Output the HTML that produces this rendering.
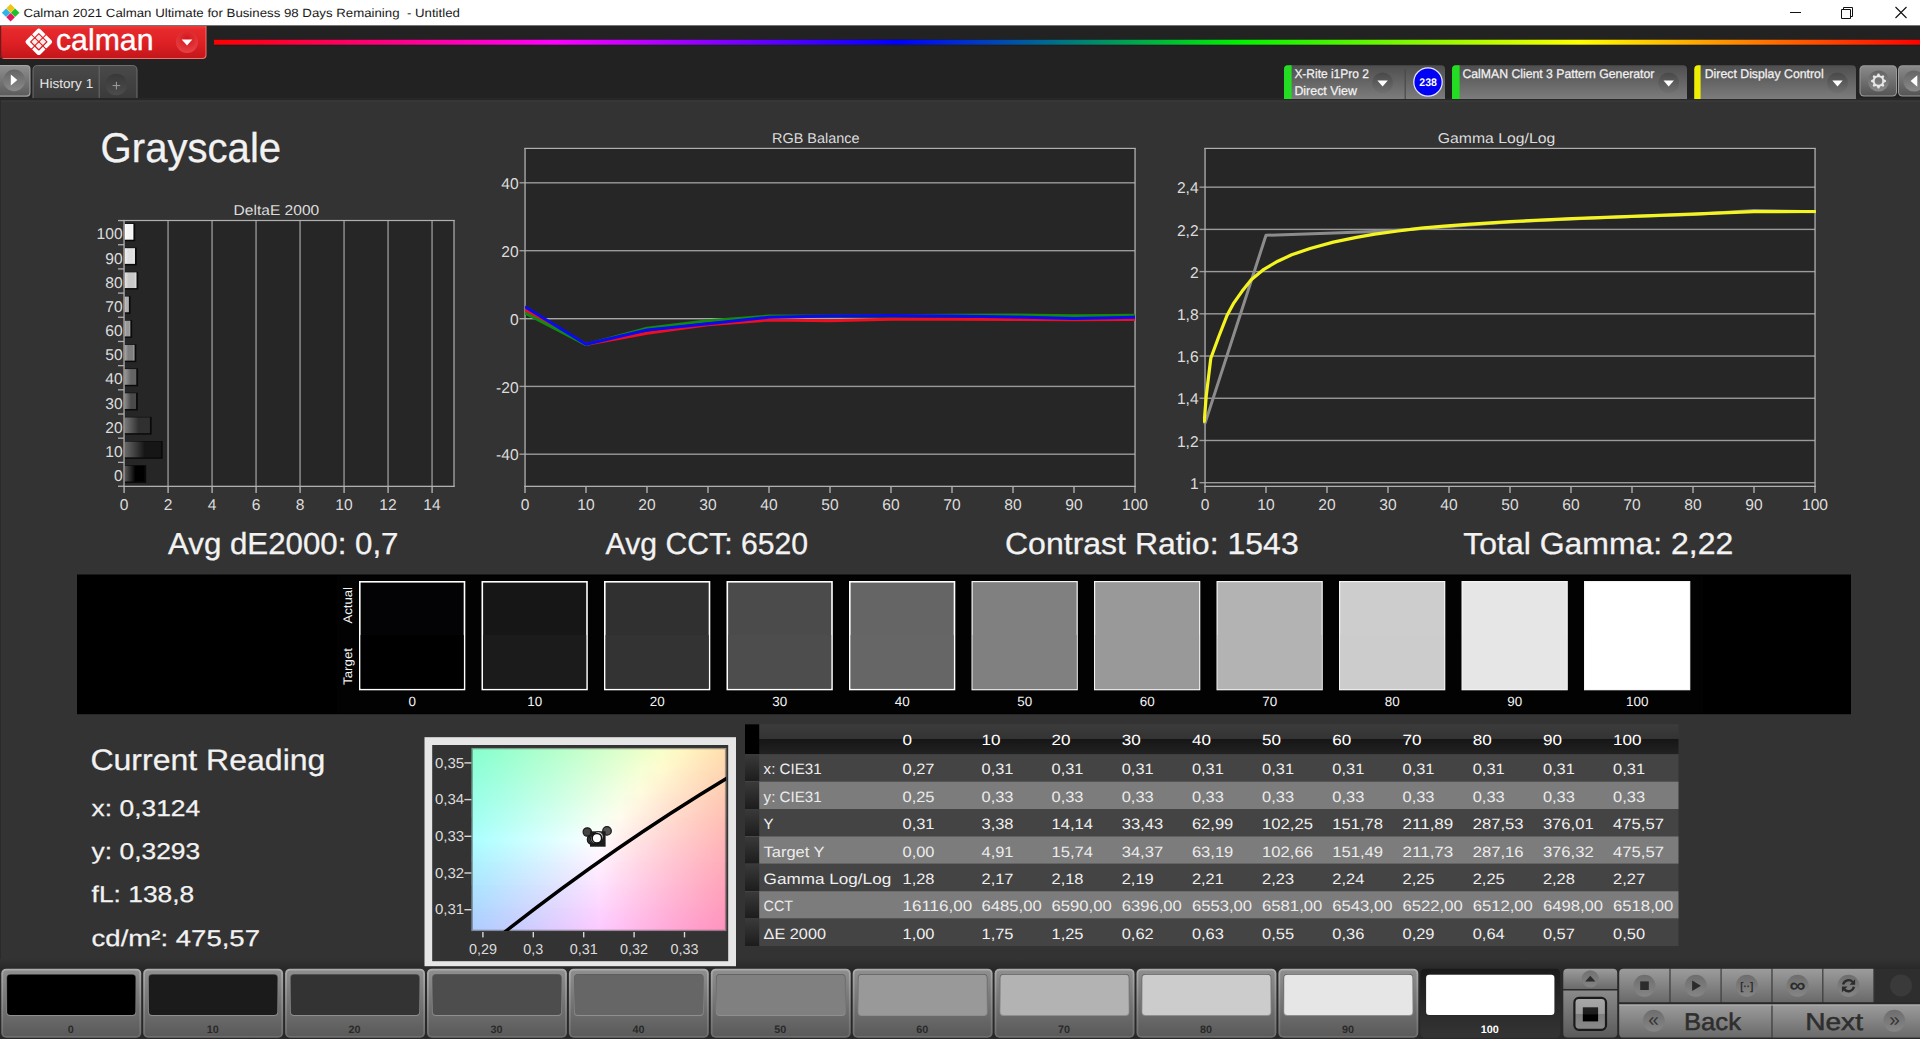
<!DOCTYPE html>
<html lang="en"><head><meta charset="utf-8"><title>Calman 2021 - Grayscale</title>
<style>html,body{margin:0;padding:0;background:#333333;overflow:hidden}svg{display:block;font-family:'Liberation Sans', sans-serif;}text{white-space:pre}</style>
</head><body>
<svg width="1920" height="1039" viewBox="0 0 1920 1039" text-rendering="geometricPrecision">
<defs>
<linearGradient id="rb" x1="0" y1="0" x2="1" y2="0"><stop offset="0" stop-color="#ff0000"/><stop offset="0.2" stop-color="#ff00ff"/><stop offset="0.4" stop-color="#0000ff"/><stop offset="0.6" stop-color="#00f000"/><stop offset="0.8" stop-color="#ffff00"/><stop offset="1" stop-color="#ff0000"/></linearGradient>
<linearGradient id="redb" x1="0" y1="0" x2="0" y2="1"><stop offset="0" stop-color="#f03a3a"/><stop offset="0.12" stop-color="#e62a2c"/><stop offset="0.55" stop-color="#dd2024"/><stop offset="1" stop-color="#c4161a"/></linearGradient>
<radialGradient id="redc" cx="0.5" cy="0.35" r="0.7"><stop offset="0" stop-color="#d4151b"/><stop offset="1" stop-color="#e84548"/></radialGradient>
<linearGradient id="playb" x1="0" y1="0" x2="0" y2="1"><stop offset="0" stop-color="#8e8e8e"/><stop offset="1" stop-color="#5c5c5c"/></linearGradient>
<linearGradient id="playc" x1="0" y1="0" x2="0" y2="1"><stop offset="0" stop-color="#646464"/><stop offset="1" stop-color="#8a8a8a"/></linearGradient>
<linearGradient id="tabg" x1="0" y1="0" x2="0" y2="1"><stop offset="0" stop-color="#4a4a4a"/><stop offset="1" stop-color="#3a3a3a"/></linearGradient>
<linearGradient id="plusc" x1="0" y1="0" x2="0" y2="1"><stop offset="0" stop-color="#383838"/><stop offset="1" stop-color="#4c4c4c"/></linearGradient>
<linearGradient id="devg" x1="0" y1="0" x2="0" y2="1"><stop offset="0" stop-color="#4e4e4e"/><stop offset="1" stop-color="#7c7c7c"/></linearGradient>
<linearGradient id="ddc" x1="0" y1="0" x2="0" y2="1"><stop offset="0" stop-color="#484848"/><stop offset="1" stop-color="#707070"/></linearGradient>
<linearGradient id="gearb" x1="0" y1="0" x2="0" y2="1"><stop offset="0" stop-color="#8a8a8a"/><stop offset="1" stop-color="#555555"/></linearGradient>
<linearGradient id="bar100" x1="0" y1="0" x2="1" y2="0"><stop offset="0" stop-color="#ffffff"/><stop offset="0.35" stop-color="#f4f4f4"/><stop offset="0.8" stop-color="#f4f4f4"/><stop offset="1" stop-color="#ffffff"/></linearGradient>
<linearGradient id="bar90" x1="0" y1="0" x2="1" y2="0"><stop offset="0" stop-color="#f0f0f0"/><stop offset="0.35" stop-color="#e0e0e0"/><stop offset="0.8" stop-color="#e0e0e0"/><stop offset="1" stop-color="#f0f0f0"/></linearGradient>
<linearGradient id="bar80" x1="0" y1="0" x2="1" y2="0"><stop offset="0" stop-color="#e4e4e4"/><stop offset="0.35" stop-color="#c8c8c8"/><stop offset="0.8" stop-color="#c8c8c8"/><stop offset="1" stop-color="#e4e4e4"/></linearGradient>
<linearGradient id="bar70" x1="0" y1="0" x2="1" y2="0"><stop offset="0" stop-color="#cccccc"/><stop offset="0.35" stop-color="#b0b0b0"/><stop offset="0.8" stop-color="#b0b0b0"/><stop offset="1" stop-color="#cccccc"/></linearGradient>
<linearGradient id="bar60" x1="0" y1="0" x2="1" y2="0"><stop offset="0" stop-color="#bbbbbb"/><stop offset="0.35" stop-color="#989898"/><stop offset="0.8" stop-color="#989898"/><stop offset="1" stop-color="#bbbbbb"/></linearGradient>
<linearGradient id="bar50" x1="0" y1="0" x2="1" y2="0"><stop offset="0" stop-color="#aaaaaa"/><stop offset="0.35" stop-color="#7e7e7e"/><stop offset="0.8" stop-color="#7e7e7e"/><stop offset="1" stop-color="#aaaaaa"/></linearGradient>
<linearGradient id="bar40" x1="0" y1="0" x2="1" y2="0"><stop offset="0" stop-color="#9a9a9a"/><stop offset="0.55" stop-color="#646464"/><stop offset="0.8" stop-color="#646464"/><stop offset="1" stop-color="#646464"/></linearGradient>
<linearGradient id="bar30" x1="0" y1="0" x2="1" y2="0"><stop offset="0" stop-color="#8a8a8a"/><stop offset="0.55" stop-color="#4a4a4a"/><stop offset="0.8" stop-color="#4a4a4a"/><stop offset="1" stop-color="#4a4a4a"/></linearGradient>
<linearGradient id="bar20" x1="0" y1="0" x2="1" y2="0"><stop offset="0" stop-color="#7a7a7a"/><stop offset="0.55" stop-color="#303030"/><stop offset="0.8" stop-color="#303030"/><stop offset="1" stop-color="#303030"/></linearGradient>
<linearGradient id="bar10" x1="0" y1="0" x2="1" y2="0"><stop offset="0" stop-color="#6a6a6a"/><stop offset="0.55" stop-color="#161616"/><stop offset="0.8" stop-color="#161616"/><stop offset="1" stop-color="#161616"/></linearGradient>
<linearGradient id="bar0" x1="0" y1="0" x2="1" y2="0"><stop offset="0" stop-color="#5a5a5a"/><stop offset="0.55" stop-color="#000000"/><stop offset="0.8" stop-color="#000000"/><stop offset="1" stop-color="#000000"/></linearGradient>
<linearGradient id="strip" x1="0" y1="0" x2="0" y2="1"><stop offset="0" stop-color="#333333"/><stop offset="1" stop-color="#292929"/></linearGradient>
<linearGradient id="cr0" x1="0" y1="0" x2="1" y2="0"><stop offset="0.0" stop-color="#86ffcd"/><stop offset="0.0833" stop-color="#91ffcd"/><stop offset="0.1667" stop-color="#9dffcc"/><stop offset="0.25" stop-color="#a9ffcc"/><stop offset="0.3333" stop-color="#b5ffcb"/><stop offset="0.4167" stop-color="#c2ffcb"/><stop offset="0.5" stop-color="#cfffca"/><stop offset="0.5833" stop-color="#dcffca"/><stop offset="0.6667" stop-color="#eaffc9"/><stop offset="0.75" stop-color="#f8ffc8"/><stop offset="0.8333" stop-color="#fff8c3"/><stop offset="0.9167" stop-color="#ffebb8"/><stop offset="1.0" stop-color="#ffdfae"/></linearGradient>
<linearGradient id="cr1" x1="0" y1="0" x2="1" y2="0"><stop offset="0.0" stop-color="#8effd9"/><stop offset="0.0833" stop-color="#9affd8"/><stop offset="0.1667" stop-color="#a6ffd8"/><stop offset="0.25" stop-color="#b3ffd7"/><stop offset="0.3333" stop-color="#bfffd7"/><stop offset="0.4167" stop-color="#cdffd7"/><stop offset="0.5" stop-color="#daffd6"/><stop offset="0.5833" stop-color="#e8ffd6"/><stop offset="0.6667" stop-color="#f6ffd5"/><stop offset="0.75" stop-color="#fffad0"/><stop offset="0.8333" stop-color="#ffecc5"/><stop offset="0.9167" stop-color="#ffe0ba"/><stop offset="1.0" stop-color="#ffd5b0"/></linearGradient>
<linearGradient id="cr2" x1="0" y1="0" x2="1" y2="0"><stop offset="0.0" stop-color="#97ffe5"/><stop offset="0.0833" stop-color="#a3ffe4"/><stop offset="0.1667" stop-color="#b0ffe4"/><stop offset="0.25" stop-color="#bdffe4"/><stop offset="0.3333" stop-color="#caffe3"/><stop offset="0.4167" stop-color="#d8ffe3"/><stop offset="0.5" stop-color="#e6ffe3"/><stop offset="0.5833" stop-color="#f4ffe3"/><stop offset="0.6667" stop-color="#fffbdf"/><stop offset="0.75" stop-color="#ffedd2"/><stop offset="0.8333" stop-color="#ffe1c7"/><stop offset="0.9167" stop-color="#ffd5bc"/><stop offset="1.0" stop-color="#ffcab2"/></linearGradient>
<linearGradient id="cr3" x1="0" y1="0" x2="1" y2="0"><stop offset="0.0" stop-color="#a0fff1"/><stop offset="0.0833" stop-color="#adfff1"/><stop offset="0.1667" stop-color="#bafff1"/><stop offset="0.25" stop-color="#c8fff1"/><stop offset="0.3333" stop-color="#d6fff1"/><stop offset="0.4167" stop-color="#e4fff1"/><stop offset="0.5" stop-color="#f3fff0"/><stop offset="0.5833" stop-color="#fffcee"/><stop offset="0.6667" stop-color="#ffeee0"/><stop offset="0.75" stop-color="#ffe1d4"/><stop offset="0.8333" stop-color="#ffd5c8"/><stop offset="0.9167" stop-color="#ffcabe"/><stop offset="1.0" stop-color="#ffc0b4"/></linearGradient>
<linearGradient id="cr4" x1="0" y1="0" x2="1" y2="0"><stop offset="0.0" stop-color="#aaffff"/><stop offset="0.0833" stop-color="#b7ffff"/><stop offset="0.1667" stop-color="#c5ffff"/><stop offset="0.25" stop-color="#d3ffff"/><stop offset="0.3333" stop-color="#e2ffff"/><stop offset="0.4167" stop-color="#f1ffff"/><stop offset="0.5" stop-color="#fffefe"/><stop offset="0.5833" stop-color="#ffefef"/><stop offset="0.6667" stop-color="#ffe2e2"/><stop offset="0.75" stop-color="#ffd5d6"/><stop offset="0.8333" stop-color="#ffcaca"/><stop offset="0.9167" stop-color="#ffc0c0"/><stop offset="1.0" stop-color="#ffb6b6"/></linearGradient>
<linearGradient id="cr5" x1="0" y1="0" x2="1" y2="0"><stop offset="0.0" stop-color="#abf2ff"/><stop offset="0.0833" stop-color="#b8f2ff"/><stop offset="0.1667" stop-color="#c5f2ff"/><stop offset="0.25" stop-color="#d3f2ff"/><stop offset="0.3333" stop-color="#e2f1ff"/><stop offset="0.4167" stop-color="#f0f1ff"/><stop offset="0.5" stop-color="#fff1ff"/><stop offset="0.5833" stop-color="#ffe3f0"/><stop offset="0.6667" stop-color="#ffd6e3"/><stop offset="0.75" stop-color="#ffcbd7"/><stop offset="0.8333" stop-color="#ffc0cc"/><stop offset="0.9167" stop-color="#ffb6c2"/><stop offset="1.0" stop-color="#ffadb8"/></linearGradient>
<linearGradient id="cr6" x1="0" y1="0" x2="1" y2="0"><stop offset="0.0" stop-color="#abe5ff"/><stop offset="0.0833" stop-color="#b8e5ff"/><stop offset="0.1667" stop-color="#c6e4ff"/><stop offset="0.25" stop-color="#d3e4ff"/><stop offset="0.3333" stop-color="#e1e4ff"/><stop offset="0.4167" stop-color="#efe3ff"/><stop offset="0.5" stop-color="#fee3ff"/><stop offset="0.5833" stop-color="#ffd7f2"/><stop offset="0.6667" stop-color="#ffcbe5"/><stop offset="0.75" stop-color="#ffc0d9"/><stop offset="0.8333" stop-color="#ffb6ce"/><stop offset="0.9167" stop-color="#ffacc3"/><stop offset="1.0" stop-color="#ffa4ba"/></linearGradient>
<linearGradient id="cr7" x1="0" y1="0" x2="1" y2="0"><stop offset="0.0" stop-color="#acd8ff"/><stop offset="0.0833" stop-color="#b9d8ff"/><stop offset="0.1667" stop-color="#c6d7ff"/><stop offset="0.25" stop-color="#d3d7ff"/><stop offset="0.3333" stop-color="#e1d6ff"/><stop offset="0.4167" stop-color="#efd6ff"/><stop offset="0.5" stop-color="#fdd5ff"/><stop offset="0.5833" stop-color="#ffcbf3"/><stop offset="0.6667" stop-color="#ffc0e6"/><stop offset="0.75" stop-color="#ffb5da"/><stop offset="0.8333" stop-color="#ffaccf"/><stop offset="0.9167" stop-color="#ffa3c5"/><stop offset="1.0" stop-color="#ff9bbc"/></linearGradient>
<linearGradient id="cr8" x1="0" y1="0" x2="1" y2="0"><stop offset="0.0" stop-color="#adccff"/><stop offset="0.0833" stop-color="#b9ccff"/><stop offset="0.1667" stop-color="#c6cbff"/><stop offset="0.25" stop-color="#d3cbff"/><stop offset="0.3333" stop-color="#e1caff"/><stop offset="0.4167" stop-color="#eec9ff"/><stop offset="0.5" stop-color="#fcc9ff"/><stop offset="0.5833" stop-color="#ffbff4"/><stop offset="0.6667" stop-color="#ffb5e7"/><stop offset="0.75" stop-color="#ffabdc"/><stop offset="0.8333" stop-color="#ffa2d1"/><stop offset="0.9167" stop-color="#ff9ac7"/><stop offset="1.0" stop-color="#ff92be"/></linearGradient>
<linearGradient id="vmg" x1="0" y1="0" x2="0" y2="1"><stop offset="0" stop-color="#000"/><stop offset="1" stop-color="#fff"/></linearGradient>
<mask id="vm" maskContentUnits="objectBoundingBox"><rect width="1" height="1" fill="url(#vmg)"/></mask>
<linearGradient id="thg" x1="0" y1="0" x2="0" y2="1"><stop offset="0" stop-color="#3c3c3c"/><stop offset="0.48" stop-color="#333333"/><stop offset="0.5" stop-color="#161616"/><stop offset="1" stop-color="#222222"/></linearGradient>
<linearGradient id="tlc" x1="0" y1="0" x2="0" y2="1"><stop offset="0" stop-color="#3a3a3a"/><stop offset="1" stop-color="#1c1c1c"/></linearGradient>
<linearGradient id="lvrim" x1="0" y1="0" x2="0" y2="1"><stop offset="0" stop-color="#acacac"/><stop offset="1" stop-color="#6c6c6c"/></linearGradient>
<linearGradient id="lvb" x1="0" y1="0" x2="0" y2="1"><stop offset="0" stop-color="#8e8e8e"/><stop offset="1" stop-color="#5a5a5a"/></linearGradient>
<linearGradient id="bev" x1="0" y1="0" x2="0" y2="1"><stop offset="0" stop-color="#4c4c4c"/><stop offset="0.5" stop-color="#6a6a6a"/><stop offset="1" stop-color="#9c9c9c"/></linearGradient>
<linearGradient id="lvsel" x1="0" y1="0" x2="0" y2="1"><stop offset="0" stop-color="#1a1a1a"/><stop offset="1" stop-color="#343434"/></linearGradient>
<linearGradient id="ctl" x1="0" y1="0" x2="0" y2="1"><stop offset="0" stop-color="#9c9c9c"/><stop offset="1" stop-color="#6a6a6a"/></linearGradient>
<linearGradient id="ctl2" x1="0" y1="0" x2="0" y2="1"><stop offset="0" stop-color="#8a8a8a"/><stop offset="1" stop-color="#5a5a5a"/></linearGradient>
<linearGradient id="sqi" x1="0" y1="0" x2="0" y2="1"><stop offset="0" stop-color="#a8a8a8"/><stop offset="0.5" stop-color="#9a9a9a"/><stop offset="0.52" stop-color="#7e7e7e"/><stop offset="1" stop-color="#8a8a8a"/></linearGradient>
<linearGradient id="sqk" x1="0" y1="0" x2="0" y2="1"><stop offset="0" stop-color="#222222"/><stop offset="0.5" stop-color="#1a1a1a"/><stop offset="0.52" stop-color="#000000"/><stop offset="1" stop-color="#000000"/></linearGradient>
</defs>
<rect x="0" y="0" width="1920" height="1039" fill="#333333"/>
<rect x="0" y="0" width="1920" height="25.6" fill="#ffffff"/>
<path d="M10.6,4.000000000000001L14.899999999999999,8.3L10.6,12.600000000000001L6.3,8.3Z" fill="#f4c414"/>
<path d="M6.1,8.5L10.399999999999999,12.8L6.1,17.1L1.7999999999999998,12.8Z" fill="#30b4e8"/>
<path d="M15.1,8.5L19.4,12.8L15.1,17.1L10.8,12.8Z" fill="#22c028"/>
<path d="M10.6,13.0L14.899999999999999,17.3L10.6,21.6L6.3,17.3Z" fill="#e8185c"/>
<text x="23.4" y="17.4" font-size="12" fill="#1a1a1a" textLength="436.5" lengthAdjust="spacingAndGlyphs" xml:space="preserve">Calman 2021 Calman Ultimate for Business 98 Days Remaining  - Untitled</text>
<path d="M1790,12.5H1801" stroke="#111" stroke-width="1" fill="none"/>
<path d="M1841.5,9.5H1850.5V18.5H1841.5Z M1843.5,9.5V7.5H1852.5V16.5H1850.5" stroke="#111" stroke-width="1" fill="none"/>
<path d="M1895.5,7L1906.5,18M1906.5,7L1895.5,18" stroke="#111" stroke-width="1.1" fill="none"/>
<rect x="0" y="25.6" width="1920" height="74.4" fill="#222222"/>
<rect x="214" y="39" width="1706" height="6.5" fill="#1a1a1a"/>
<rect x="214" y="39.7" width="1706" height="5" fill="url(#rb)"/>
<path d="M0,26H206.5V55Q206.5,59 202.5,59H4Q0,59 0,55Z" fill="#f4706c"/>
<path d="M0,26H205.5V54.5Q205.5,58 202.0,58H3.5Q0,58 0,54.5Z" fill="url(#redb)"/>
<path d="M0,26H1.2V54.6Q1.2,57 3.4,58.2L1.5,59Q0,58 0,56Z" fill="#5a1a1a" fill-opacity="0.85"/>
<g transform="translate(38.8,41.8) rotate(45) scale(1.06)">
<g transform="scale(1,1)">
<rect x="0.5" y="0.5" width="4.4" height="4.4" rx="0.7" fill="#ffecec"/>
<path d="M0.5,6V9Q0.5,9.5 1,9.5H7Q9.5,9.5 9.5,7V1Q9.5,0.5 9,0.5H6V5.5Q6,6 5.5,6Z" fill="#ffffff"/>
</g>
<g transform="scale(1,-1)">
<rect x="0.5" y="0.5" width="4.4" height="4.4" rx="0.7" fill="#ffecec"/>
<path d="M0.5,6V9Q0.5,9.5 1,9.5H7Q9.5,9.5 9.5,7V1Q9.5,0.5 9,0.5H6V5.5Q6,6 5.5,6Z" fill="#ffffff"/>
</g>
<g transform="scale(-1,1)">
<rect x="0.5" y="0.5" width="4.4" height="4.4" rx="0.7" fill="#ffecec"/>
<path d="M0.5,6V9Q0.5,9.5 1,9.5H7Q9.5,9.5 9.5,7V1Q9.5,0.5 9,0.5H6V5.5Q6,6 5.5,6Z" fill="#ffffff"/>
</g>
<g transform="scale(-1,-1)">
<rect x="0.5" y="0.5" width="4.4" height="4.4" rx="0.7" fill="#ffecec"/>
<path d="M0.5,6V9Q0.5,9.5 1,9.5H7Q9.5,9.5 9.5,7V1Q9.5,0.5 9,0.5H6V5.5Q6,6 5.5,6Z" fill="#ffffff"/>
</g>
</g>
<text x="56" y="49.6" font-size="30" fill="#ffffff" textLength="97.5" lengthAdjust="spacingAndGlyphs" stroke="#ffffff" stroke-width="0.35">calman</text>
<circle cx="187" cy="42" r="11" fill="url(#redc)"/>
<path d="M181.7,39.4H192.3L187,45.6Z" fill="#ffffff"/>
<path d="M0,65H26.5Q30.5,65 30.5,69V92.7Q30.5,96.7 26.5,96.7H0Z" fill="#a4a4a4"/>
<path d="M0,66H26Q29.5,66 29.5,69.5V92Q29.5,95.5 26,95.5H0Z" fill="url(#playb)"/>
<circle cx="14.2" cy="80.4" r="10.8" fill="url(#playc)"/>
<path d="M10.8,74.4V85.6L17.3,80Z" fill="#ffffff"/>
<path d="M33,99V70.0Q33,65.5 37.5,65.5H132.5Q137,65.5 137,70.0V99Z" fill="url(#tabg)" stroke="#6e6e6e" stroke-width="1"/>
<rect x="98.6" y="66" width="1.2" height="33" fill="#646464"/>
<text x="39.6" y="88" font-size="13.2" fill="#e6e6e6" textLength="53.6" lengthAdjust="spacingAndGlyphs">History 1</text>
<circle cx="116.3" cy="84.5" r="10.8" fill="url(#plusc)"/>
<path d="M112.6,85.6H120.2M116.4,81.8V89.4" stroke="#a0a0a0" stroke-width="1" fill="none"/>
<rect x="0" y="98" width="1920" height="2" fill="#272727"/>
<rect x="0" y="100.4" width="1920" height="1.6" fill="#383838"/>
<rect x="0" y="100" width="1" height="868" fill="#2a2a2a"/>
<path d="M1284,99V69.3Q1284,65.3 1288,65.3H1441Q1445,65.3 1445,69.3V99Z" fill="url(#devg)"/>
<path d="M1284,99V69.3Q1284,65.3 1288,65.3H1291.6V99Z" fill="#22dd22"/>
<text x="1294.4" y="78.3" font-size="12.6" fill="#f2f2f2" textLength="74.5" lengthAdjust="spacingAndGlyphs" stroke="#f2f2f2" stroke-width="0.25">X-Rite i1Pro 2</text>
<text x="1294.4" y="94.9" font-size="12.6" fill="#f2f2f2" textLength="62.5" lengthAdjust="spacingAndGlyphs" stroke="#f2f2f2" stroke-width="0.25">Direct View</text>
<circle cx="1382.6" cy="82.8" r="10.4" fill="url(#ddc)"/>
<path d="M1377.3999999999999,80.6H1387.8L1382.6,86.6Z" fill="#ffffff"/>
<rect x="1404.6" y="69" width="1.2" height="30" fill="#4a4a4a"/>
<circle cx="1428" cy="82" r="14.2" fill="#0000f4" stroke="#e8e8ff" stroke-width="1.2"/>
<text x="1419.3" y="86" font-size="11" fill="#ffffff" textLength="17.6" lengthAdjust="spacingAndGlyphs" font-weight="bold">238</text>
<path d="M1452,99V69.3Q1452,65.3 1456,65.3H1683Q1687,65.3 1687,69.3V99Z" fill="url(#devg)"/>
<path d="M1452,99V69.3Q1452,65.3 1456,65.3H1459.6V99Z" fill="#22dd22"/>
<text x="1462.4" y="78.3" font-size="12.6" fill="#f2f2f2" textLength="192" lengthAdjust="spacingAndGlyphs" stroke="#f2f2f2" stroke-width="0.25">CalMAN Client 3 Pattern Generator</text>
<circle cx="1668.7" cy="82.8" r="10.4" fill="url(#ddc)"/>
<path d="M1663.5,80.6H1673.9L1668.7,86.6Z" fill="#ffffff"/>
<path d="M1694.3,99V69.3Q1694.3,65.3 1698.3,65.3H1852Q1856,65.3 1856,69.3V99Z" fill="url(#devg)"/>
<path d="M1694.3,99V69.3Q1694.3,65.3 1698.3,65.3H1700.6V99Z" fill="#eeee00"/>
<text x="1704.7" y="78.3" font-size="12.6" fill="#f2f2f2" textLength="119" lengthAdjust="spacingAndGlyphs" stroke="#f2f2f2" stroke-width="0.25">Direct Display Control</text>
<circle cx="1837.5" cy="82.8" r="10.4" fill="url(#ddc)"/>
<path d="M1832.3,80.6H1842.7L1837.5,86.6Z" fill="#ffffff"/>
<rect x="1859.5" y="65.3" width="37.5" height="31.2" rx="4.5" fill="#9a9a9a"/>
<rect x="1860.5" y="66.3" width="35.5" height="29.2" rx="3.8" fill="url(#gearb)"/>
<circle cx="1878.5" cy="81" r="10.6" fill="url(#playc)"/>
<path d="M1885.96,80.26L1885.96,81.74L1883.95,82.65L1883.53,83.69L1884.30,85.76L1883.26,86.80L1881.19,86.03L1880.15,86.45L1879.24,88.46L1877.76,88.46L1876.85,86.45L1875.81,86.03L1873.74,86.80L1872.70,85.76L1873.47,83.69L1873.05,82.65L1871.04,81.74L1871.04,80.26L1873.05,79.35L1873.47,78.31L1872.70,76.24L1873.74,75.20L1875.81,75.97L1876.85,75.55L1877.76,73.54L1879.24,73.54L1880.15,75.55L1881.19,75.97L1883.26,75.20L1884.30,76.24L1883.53,78.31L1883.95,79.35Z M1882.3,81A3.8,3.8 0 1 0 1874.7,81A3.8,3.8 0 1 0 1882.3,81Z" fill="#e8e8e8" fill-rule="evenodd"/>
<rect x="1898" y="65.3" width="40" height="31.2" rx="4.5" fill="#9a9a9a"/>
<rect x="1899" y="66.3" width="40" height="29.2" rx="3.8" fill="url(#gearb)"/>
<circle cx="1914" cy="81" r="10.6" fill="url(#playc)"/>
<path d="M1917.3,75.2V86.8L1910.6,81Z" fill="#ffffff"/>
<text x="100.6" y="162" font-size="41.5" fill="#f2f2f2" textLength="180.5" lengthAdjust="spacingAndGlyphs" stroke="#f2f2f2" stroke-width="0.3">Grayscale</text>
<text x="233.6" y="214.8" font-size="14.2" fill="#dcdcdc" textLength="85.6" lengthAdjust="spacingAndGlyphs">DeltaE 2000</text>
<rect x="124" y="220.5" width="330" height="266" fill="#262626"/>
<rect x="167.4" y="220.5" width="1.3" height="266" fill="#9a9a9a"/>
<rect x="211.4" y="220.5" width="1.3" height="266" fill="#9a9a9a"/>
<rect x="255.4" y="220.5" width="1.3" height="266" fill="#9a9a9a"/>
<rect x="299.4" y="220.5" width="1.3" height="266" fill="#9a9a9a"/>
<rect x="343.4" y="220.5" width="1.3" height="266" fill="#9a9a9a"/>
<rect x="387.4" y="220.5" width="1.3" height="266" fill="#9a9a9a"/>
<rect x="431.4" y="220.5" width="1.3" height="266" fill="#9a9a9a"/>
<rect x="124" y="223.3909090909091" width="11.2" height="17.8" fill="#0a0a0a"/>
<rect x="124.6" y="223.9909090909091" width="8.8" height="15.7" fill="url(#bar100)"/>
<rect x="118" y="219.9" width="6" height="1.3" fill="#b0b0b0"/>
<text x="122.6" y="239.3909090909091" font-size="15.6" fill="#dcdcdc" text-anchor="end">100</text>
<rect x="124" y="247.57272727272726" width="12.739999999999998" height="17.8" fill="#0a0a0a"/>
<rect x="124.6" y="248.17272727272726" width="10.34" height="15.7" fill="url(#bar90)"/>
<rect x="118" y="244.0818181818182" width="6" height="1.3" fill="#b0b0b0"/>
<text x="122.6" y="263.57272727272726" font-size="15.6" fill="#dcdcdc" text-anchor="end">90</text>
<rect x="124" y="271.75454545454545" width="14.28" height="17.8" fill="#0a0a0a"/>
<rect x="124.6" y="272.3545454545454" width="11.879999999999999" height="15.7" fill="url(#bar80)"/>
<rect x="118" y="268.26363636363635" width="6" height="1.3" fill="#b0b0b0"/>
<text x="122.6" y="287.75454545454545" font-size="15.6" fill="#dcdcdc" text-anchor="end">80</text>
<rect x="124" y="295.93636363636364" width="6.58" height="17.8" fill="#0a0a0a"/>
<rect x="124.6" y="296.5363636363636" width="4.18" height="15.7" fill="url(#bar70)"/>
<rect x="118" y="292.44545454545454" width="6" height="1.3" fill="#b0b0b0"/>
<text x="122.6" y="311.93636363636364" font-size="15.6" fill="#dcdcdc" text-anchor="end">70</text>
<rect x="124" y="320.1181818181818" width="8.12" height="17.8" fill="#0a0a0a"/>
<rect x="124.6" y="320.7181818181818" width="5.72" height="15.7" fill="url(#bar60)"/>
<rect x="118" y="316.6272727272727" width="6" height="1.3" fill="#b0b0b0"/>
<text x="122.6" y="336.1181818181818" font-size="15.6" fill="#dcdcdc" text-anchor="end">60</text>
<rect x="124" y="344.3" width="12.3" height="17.8" fill="#0a0a0a"/>
<rect x="124.6" y="344.9" width="9.900000000000002" height="15.7" fill="url(#bar50)"/>
<rect x="118" y="340.8090909090909" width="6" height="1.3" fill="#b0b0b0"/>
<text x="122.6" y="360.3" font-size="15.6" fill="#dcdcdc" text-anchor="end">50</text>
<rect x="124" y="368.4818181818182" width="14.059999999999999" height="17.8" fill="#0a0a0a"/>
<rect x="124.6" y="369.08181818181816" width="11.66" height="15.7" fill="url(#bar40)"/>
<rect x="118" y="364.9909090909091" width="6" height="1.3" fill="#b0b0b0"/>
<text x="122.6" y="384.4818181818182" font-size="15.6" fill="#dcdcdc" text-anchor="end">40</text>
<rect x="124" y="392.66363636363633" width="13.84" height="17.8" fill="#0a0a0a"/>
<rect x="124.6" y="393.2636363636363" width="11.440000000000001" height="15.7" fill="url(#bar30)"/>
<rect x="118" y="389.17272727272723" width="6" height="1.3" fill="#b0b0b0"/>
<text x="122.6" y="408.66363636363633" font-size="15.6" fill="#dcdcdc" text-anchor="end">30</text>
<rect x="124" y="416.8454545454546" width="27.7" height="17.8" fill="#0a0a0a"/>
<rect x="124.6" y="417.44545454545454" width="25.3" height="15.7" fill="url(#bar20)"/>
<rect x="118" y="413.3545454545455" width="6" height="1.3" fill="#b0b0b0"/>
<text x="122.6" y="432.8454545454546" font-size="15.6" fill="#dcdcdc" text-anchor="end">20</text>
<rect x="124" y="441.0272727272727" width="38.7" height="17.8" fill="#0a0a0a"/>
<rect x="124.6" y="441.62727272727267" width="36.3" height="15.7" fill="url(#bar10)"/>
<rect x="118" y="437.5363636363636" width="6" height="1.3" fill="#b0b0b0"/>
<text x="122.6" y="457.0272727272727" font-size="15.6" fill="#dcdcdc" text-anchor="end">10</text>
<rect x="124" y="465.20909090909095" width="22.2" height="17.8" fill="#0a0a0a"/>
<rect x="124.6" y="465.8090909090909" width="19.8" height="15.7" fill="url(#bar0)"/>
<rect x="118" y="461.71818181818185" width="6" height="1.3" fill="#b0b0b0"/>
<text x="122.6" y="481.20909090909095" font-size="15.6" fill="#dcdcdc" text-anchor="end">0</text>
<rect x="118" y="485.6" width="6" height="1.3" fill="#b0b0b0"/>
<rect x="123.4" y="220" width="1.3" height="267" fill="#b0b0b0"/>
<rect x="123.4" y="219.9" width="331.2" height="1.2" fill="#b0b0b0"/>
<rect x="453.4" y="220" width="1.2" height="267" fill="#b0b0b0"/>
<rect x="123.4" y="485.7" width="331.2" height="1.3" fill="#b0b0b0"/>
<rect x="123.4" y="486" width="1.4" height="7" fill="#b0b0b0"/>
<text x="124" y="510" font-size="15.6" fill="#dcdcdc" text-anchor="middle">0</text>
<rect x="167.4" y="486" width="1.4" height="7" fill="#b0b0b0"/>
<text x="168" y="510" font-size="15.6" fill="#dcdcdc" text-anchor="middle">2</text>
<rect x="211.4" y="486" width="1.4" height="7" fill="#b0b0b0"/>
<text x="212" y="510" font-size="15.6" fill="#dcdcdc" text-anchor="middle">4</text>
<rect x="255.4" y="486" width="1.4" height="7" fill="#b0b0b0"/>
<text x="256" y="510" font-size="15.6" fill="#dcdcdc" text-anchor="middle">6</text>
<rect x="299.4" y="486" width="1.4" height="7" fill="#b0b0b0"/>
<text x="300" y="510" font-size="15.6" fill="#dcdcdc" text-anchor="middle">8</text>
<rect x="343.4" y="486" width="1.4" height="7" fill="#b0b0b0"/>
<text x="344" y="510" font-size="15.6" fill="#dcdcdc" text-anchor="middle">10</text>
<rect x="387.4" y="486" width="1.4" height="7" fill="#b0b0b0"/>
<text x="388" y="510" font-size="15.6" fill="#dcdcdc" text-anchor="middle">12</text>
<rect x="431.4" y="486" width="1.4" height="7" fill="#b0b0b0"/>
<text x="432" y="510" font-size="15.6" fill="#dcdcdc" text-anchor="middle">14</text>
<text x="772" y="142.8" font-size="14.2" fill="#dcdcdc" textLength="87.6" lengthAdjust="spacingAndGlyphs">RGB Balance</text>
<rect x="525" y="148.5" width="610" height="338" fill="#262626"/>
<rect x="519.5" y="182.10000000000002" width="615.5" height="1.4" fill="#9a9a9a"/>
<text x="518.6" y="189.0" font-size="15.6" fill="#dcdcdc" text-anchor="end">40</text>
<rect x="519.5" y="250.0" width="615.5" height="1.4" fill="#9a9a9a"/>
<text x="518.6" y="256.9" font-size="15.6" fill="#dcdcdc" text-anchor="end">20</text>
<rect x="519.5" y="318.0" width="615.5" height="1.4" fill="#a8a8a8"/>
<text x="518.6" y="324.9" font-size="15.6" fill="#dcdcdc" text-anchor="end">0</text>
<rect x="519.5" y="385.7" width="615.5" height="1.4" fill="#9a9a9a"/>
<text x="518.6" y="392.59999999999997" font-size="15.6" fill="#dcdcdc" text-anchor="end">-20</text>
<rect x="519.5" y="453.5" width="615.5" height="1.4" fill="#9a9a9a"/>
<text x="518.6" y="460.4" font-size="15.6" fill="#dcdcdc" text-anchor="end">-40</text>
<rect x="524.4" y="148" width="1.3" height="339" fill="#b0b0b0"/>
<rect x="524.4" y="147.8" width="611.2" height="1.2" fill="#b0b0b0"/>
<rect x="1134.4" y="148" width="1.3" height="339" fill="#b0b0b0"/>
<rect x="524.4" y="485.7" width="611.2" height="1.3" fill="#b0b0b0"/>
<rect x="524.3" y="486" width="1.4" height="7" fill="#b0b0b0"/>
<text x="525" y="510" font-size="15.6" fill="#dcdcdc" text-anchor="middle">0</text>
<rect x="585.3" y="486" width="1.4" height="7" fill="#b0b0b0"/>
<text x="586" y="510" font-size="15.6" fill="#dcdcdc" text-anchor="middle">10</text>
<rect x="646.3" y="486" width="1.4" height="7" fill="#b0b0b0"/>
<text x="647" y="510" font-size="15.6" fill="#dcdcdc" text-anchor="middle">20</text>
<rect x="707.3" y="486" width="1.4" height="7" fill="#b0b0b0"/>
<text x="708" y="510" font-size="15.6" fill="#dcdcdc" text-anchor="middle">30</text>
<rect x="768.3" y="486" width="1.4" height="7" fill="#b0b0b0"/>
<text x="769" y="510" font-size="15.6" fill="#dcdcdc" text-anchor="middle">40</text>
<rect x="829.3" y="486" width="1.4" height="7" fill="#b0b0b0"/>
<text x="830" y="510" font-size="15.6" fill="#dcdcdc" text-anchor="middle">50</text>
<rect x="890.3" y="486" width="1.4" height="7" fill="#b0b0b0"/>
<text x="891" y="510" font-size="15.6" fill="#dcdcdc" text-anchor="middle">60</text>
<rect x="951.3" y="486" width="1.4" height="7" fill="#b0b0b0"/>
<text x="952" y="510" font-size="15.6" fill="#dcdcdc" text-anchor="middle">70</text>
<rect x="1012.3" y="486" width="1.4" height="7" fill="#b0b0b0"/>
<text x="1013" y="510" font-size="15.6" fill="#dcdcdc" text-anchor="middle">80</text>
<rect x="1073.3" y="486" width="1.4" height="7" fill="#b0b0b0"/>
<text x="1074" y="510" font-size="15.6" fill="#dcdcdc" text-anchor="middle">90</text>
<rect x="1134.3" y="486" width="1.4" height="7" fill="#b0b0b0"/>
<text x="1135" y="510" font-size="15.6" fill="#dcdcdc" text-anchor="middle">100</text>
<clipPath id="rgbclip"><rect x="525" y="148.5" width="610" height="337.5"/></clipPath>
<g clip-path="url(#rgbclip)" fill="none" stroke-width="3" stroke-linejoin="round">
<polyline points="525,310.0 586,344.4 647,333.3 708,324.7 769,320.0 830,320.8 891,319.2 952,319.2 1013,319.4 1074,319.8 1135,319.4" stroke="#ee1020"/>
<polyline points="525,313.0 586,344.6 647,328.3 708,320.8 769,316.0 830,316.2 891,315.8 952,315.3 1013,315.0 1074,315.7 1135,315.3" stroke="#128a12"/>
<polyline points="525,306.7 586,344.2 647,330.0 708,323.7 769,317.2 830,316.0 891,315.6 952,316.0 1013,317.0 1074,318.6 1135,317.2" stroke="#0a0aee"/>
</g>
<text x="1437.8" y="142.8" font-size="14.2" fill="#dcdcdc" textLength="117.4" lengthAdjust="spacingAndGlyphs">Gamma Log/Log</text>
<rect x="1205" y="148.5" width="610" height="338" fill="#262626"/>
<rect x="1199.5" y="482.0" width="615.5" height="1.4" fill="#9a9a9a"/>
<text x="1198.6" y="488.9" font-size="15.6" fill="#dcdcdc" text-anchor="end">1</text>
<rect x="1199.5" y="439.78000000000003" width="615.5" height="1.4" fill="#9a9a9a"/>
<text x="1198.6" y="446.68" font-size="15.6" fill="#dcdcdc" text-anchor="end">1,2</text>
<rect x="1199.5" y="397.56" width="615.5" height="1.4" fill="#9a9a9a"/>
<text x="1198.6" y="404.46" font-size="15.6" fill="#dcdcdc" text-anchor="end">1,4</text>
<rect x="1199.5" y="355.34" width="615.5" height="1.4" fill="#9a9a9a"/>
<text x="1198.6" y="362.23999999999995" font-size="15.6" fill="#dcdcdc" text-anchor="end">1,6</text>
<rect x="1199.5" y="313.12" width="615.5" height="1.4" fill="#9a9a9a"/>
<text x="1198.6" y="320.02" font-size="15.6" fill="#dcdcdc" text-anchor="end">1,8</text>
<rect x="1199.5" y="270.90000000000003" width="615.5" height="1.4" fill="#9a9a9a"/>
<text x="1198.6" y="277.8" font-size="15.6" fill="#dcdcdc" text-anchor="end">2</text>
<rect x="1199.5" y="228.67999999999998" width="615.5" height="1.4" fill="#9a9a9a"/>
<text x="1198.6" y="235.57999999999996" font-size="15.6" fill="#dcdcdc" text-anchor="end">2,2</text>
<rect x="1199.5" y="186.46000000000004" width="615.5" height="1.4" fill="#9a9a9a"/>
<text x="1198.6" y="193.36" font-size="15.6" fill="#dcdcdc" text-anchor="end">2,4</text>
<rect x="1204.4" y="148" width="1.3" height="339" fill="#b0b0b0"/>
<rect x="1204.4" y="147.8" width="611.2" height="1.2" fill="#b0b0b0"/>
<rect x="1814.4" y="148" width="1.3" height="339" fill="#b0b0b0"/>
<rect x="1204.4" y="485.7" width="611.2" height="1.3" fill="#b0b0b0"/>
<rect x="1204.3" y="486" width="1.4" height="7" fill="#b0b0b0"/>
<text x="1205" y="510" font-size="15.6" fill="#dcdcdc" text-anchor="middle">0</text>
<rect x="1265.3" y="486" width="1.4" height="7" fill="#b0b0b0"/>
<text x="1266" y="510" font-size="15.6" fill="#dcdcdc" text-anchor="middle">10</text>
<rect x="1326.3" y="486" width="1.4" height="7" fill="#b0b0b0"/>
<text x="1327" y="510" font-size="15.6" fill="#dcdcdc" text-anchor="middle">20</text>
<rect x="1387.3" y="486" width="1.4" height="7" fill="#b0b0b0"/>
<text x="1388" y="510" font-size="15.6" fill="#dcdcdc" text-anchor="middle">30</text>
<rect x="1448.3" y="486" width="1.4" height="7" fill="#b0b0b0"/>
<text x="1449" y="510" font-size="15.6" fill="#dcdcdc" text-anchor="middle">40</text>
<rect x="1509.3" y="486" width="1.4" height="7" fill="#b0b0b0"/>
<text x="1510" y="510" font-size="15.6" fill="#dcdcdc" text-anchor="middle">50</text>
<rect x="1570.3" y="486" width="1.4" height="7" fill="#b0b0b0"/>
<text x="1571" y="510" font-size="15.6" fill="#dcdcdc" text-anchor="middle">60</text>
<rect x="1631.3" y="486" width="1.4" height="7" fill="#b0b0b0"/>
<text x="1632" y="510" font-size="15.6" fill="#dcdcdc" text-anchor="middle">70</text>
<rect x="1692.3" y="486" width="1.4" height="7" fill="#b0b0b0"/>
<text x="1693" y="510" font-size="15.6" fill="#dcdcdc" text-anchor="middle">80</text>
<rect x="1753.3" y="486" width="1.4" height="7" fill="#b0b0b0"/>
<text x="1754" y="510" font-size="15.6" fill="#dcdcdc" text-anchor="middle">90</text>
<rect x="1814.3" y="486" width="1.4" height="7" fill="#b0b0b0"/>
<text x="1815" y="510" font-size="15.6" fill="#dcdcdc" text-anchor="middle">100</text>
<clipPath id="gclip"><rect x="1203" y="148.5" width="613" height="337.5"/></clipPath>
<g clip-path="url(#gclip)" fill="none" stroke-linejoin="round" stroke-linecap="round">
<polyline points="1205,423.4 1266,235.3 1327,233.2 1388,231.1 1449,226.4 1510,222 1571,219 1632,216.6 1693,214.5 1754,210.6 1815,211.8" stroke="#8c8c8c" stroke-width="3"/>
<polyline points="1204.3,421.3 1206.2,396.4 1210.8,358.3 1218.9,336.3 1227,315.5 1233.9,302.8 1242,291.3 1251.2,279.7 1263.9,269.3 1277.8,261.2 1291.7,254.8 1310.1,248.5 1333.3,242.1 1356.4,237.4 1374.8,234.2 1398,231 1421.1,228.2 1444.2,226.1 1467.3,224.3 1490.4,222.9 1510,221.6 1571.8,218.6 1632,216.4 1691.3,214.2 1754,211.6 1815,211.5" stroke="#f4f420" stroke-width="3.2"/>
</g>
<text x="168" y="553.7" font-size="30.4" fill="#f2f2f2" textLength="230.5" lengthAdjust="spacingAndGlyphs" stroke="#f2f2f2" stroke-width="0.3">Avg dE2000: 0,7</text>
<text x="605.6" y="553.7" font-size="30.4" fill="#f2f2f2" textLength="202.5" lengthAdjust="spacingAndGlyphs" stroke="#f2f2f2" stroke-width="0.3">Avg CCT: 6520</text>
<text x="1005" y="553.7" font-size="30.4" fill="#f2f2f2" textLength="293.7" lengthAdjust="spacingAndGlyphs" stroke="#f2f2f2" stroke-width="0.3">Contrast Ratio: 1543</text>
<text x="1463.3" y="553.7" font-size="30.4" fill="#f2f2f2" textLength="270" lengthAdjust="spacingAndGlyphs" stroke="#f2f2f2" stroke-width="0.3">Total Gamma: 2,22</text>
<rect x="0" y="959" width="1920" height="9" fill="url(#strip)"/>
<rect x="0" y="968" width="1920" height="71" fill="#292929"/>
<rect x="77" y="574.5" width="1774" height="139.7" fill="#000000"/>
<rect x="337" y="576" width="1366" height="137" fill="#020202"/>
<rect x="359.0" y="581" width="106.3" height="109.3" fill="#ffffff"/>
<rect x="360.6" y="582.6" width="103.1" height="106.1" fill="#030305"/>
<rect x="360.6" y="635" width="103.1" height="53.699999999999996" fill="#000000"/>
<text x="412.2" y="705.8" font-size="13.4" fill="#f4f4f4" text-anchor="middle">0</text>
<rect x="481.5" y="581" width="106.3" height="109.3" fill="#ffffff"/>
<rect x="483.1" y="582.6" width="103.1" height="106.1" fill="#161616"/>
<rect x="483.1" y="635" width="103.1" height="53.699999999999996" fill="#1b1b1b"/>
<text x="534.7" y="705.8" font-size="13.4" fill="#f4f4f4" text-anchor="middle">10</text>
<rect x="604.0" y="581" width="106.3" height="109.3" fill="#ffffff"/>
<rect x="605.6" y="582.6" width="103.1" height="106.1" fill="#303030"/>
<rect x="605.6" y="635" width="103.1" height="53.699999999999996" fill="#333333"/>
<text x="657.2" y="705.8" font-size="13.4" fill="#f4f4f4" text-anchor="middle">20</text>
<rect x="726.5" y="581" width="106.3" height="109.3" fill="#ffffff"/>
<rect x="728.1" y="582.6" width="103.1" height="106.1" fill="#4b4b4b"/>
<rect x="728.1" y="635" width="103.1" height="53.699999999999996" fill="#4d4d4d"/>
<text x="779.7" y="705.8" font-size="13.4" fill="#f4f4f4" text-anchor="middle">30</text>
<rect x="849.0" y="581" width="106.3" height="109.3" fill="#ffffff"/>
<rect x="850.6" y="582.6" width="103.1" height="106.1" fill="#656565"/>
<rect x="850.6" y="635" width="103.1" height="53.699999999999996" fill="#666666"/>
<text x="902.2" y="705.8" font-size="13.4" fill="#f4f4f4" text-anchor="middle">40</text>
<rect x="971.5" y="581" width="106.3" height="109.3" fill="#f4f4f4"/>
<rect x="972.7" y="582.2" width="103.89999999999999" height="106.89999999999999" fill="#808080"/>
<rect x="972.7" y="635" width="103.89999999999999" height="54.099999999999994" fill="#808080"/>
<text x="1024.7" y="705.8" font-size="13.4" fill="#f4f4f4" text-anchor="middle">50</text>
<rect x="1094.0" y="581" width="106.3" height="109.3" fill="#f4f4f4"/>
<rect x="1095.2" y="582.2" width="103.89999999999999" height="106.89999999999999" fill="#999999"/>
<rect x="1095.2" y="635" width="103.89999999999999" height="54.099999999999994" fill="#999999"/>
<text x="1147.2" y="705.8" font-size="13.4" fill="#f4f4f4" text-anchor="middle">60</text>
<rect x="1216.5" y="581" width="106.3" height="109.3" fill="#f4f4f4"/>
<rect x="1217.7" y="582.2" width="103.89999999999999" height="106.89999999999999" fill="#b3b3b3"/>
<rect x="1217.7" y="635" width="103.89999999999999" height="54.099999999999994" fill="#b3b3b3"/>
<text x="1269.7" y="705.8" font-size="13.4" fill="#f4f4f4" text-anchor="middle">70</text>
<rect x="1339.0" y="581" width="106.3" height="109.3" fill="#f4f4f4"/>
<rect x="1340.2" y="582.2" width="103.89999999999999" height="106.89999999999999" fill="#cdcdcd"/>
<rect x="1340.2" y="635" width="103.89999999999999" height="54.099999999999994" fill="#cccccc"/>
<text x="1392.2" y="705.8" font-size="13.4" fill="#f4f4f4" text-anchor="middle">80</text>
<rect x="1461.5" y="581" width="106.3" height="109.3" fill="#f4f4f4"/>
<rect x="1462.7" y="582.2" width="103.89999999999999" height="106.89999999999999" fill="#e6e6e6"/>
<rect x="1462.7" y="635" width="103.89999999999999" height="54.099999999999994" fill="#e6e6e6"/>
<text x="1514.7" y="705.8" font-size="13.4" fill="#f4f4f4" text-anchor="middle">90</text>
<rect x="1584.0" y="581" width="106.3" height="109.3" fill="#f4f4f4"/>
<rect x="1585.2" y="582.2" width="103.89999999999999" height="106.89999999999999" fill="#ffffff"/>
<rect x="1585.2" y="635" width="103.89999999999999" height="54.099999999999994" fill="#ffffff"/>
<text x="1637.2" y="705.8" font-size="13.4" fill="#f4f4f4" text-anchor="middle">100</text>
<text transform="translate(351.6,623.6) rotate(-90)" font-size="12.4" fill="#f4f4f4" textLength="36.6" lengthAdjust="spacingAndGlyphs">Actual</text>
<text transform="translate(351.6,685) rotate(-90)" font-size="12.4" fill="#f4f4f4" textLength="37" lengthAdjust="spacingAndGlyphs">Target</text>
<text x="90.4" y="770.4" font-size="29.6" fill="#f2f2f2" textLength="235" lengthAdjust="spacingAndGlyphs" stroke="#f2f2f2" stroke-width="0.25">Current Reading</text>
<text x="91.6" y="815.6" font-size="22.8" fill="#f2f2f2" textLength="108.6" lengthAdjust="spacingAndGlyphs" stroke="#f2f2f2" stroke-width="0.25">x: 0,3124</text>
<text x="91.6" y="859.2" font-size="22.8" fill="#f2f2f2" textLength="108.6" lengthAdjust="spacingAndGlyphs" stroke="#f2f2f2" stroke-width="0.25">y: 0,3293</text>
<text x="91.6" y="902.2" font-size="22.8" fill="#f2f2f2" textLength="102.6" lengthAdjust="spacingAndGlyphs" stroke="#f2f2f2" stroke-width="0.25">fL: 138,8</text>
<text x="91.6" y="945.6" font-size="22.8" fill="#f2f2f2" textLength="168.4" lengthAdjust="spacingAndGlyphs" stroke="#f2f2f2" stroke-width="0.25">cd/m²: 475,57</text>
<rect x="424.5" y="737.2" width="311.5" height="229" fill="#e6e6e6"/>
<rect x="432.2" y="745" width="296" height="216.2" fill="#333333"/>
<rect x="471.6" y="748.00" width="254.60" height="23.00" fill="url(#cr0)"/>
<rect x="471.6" y="748.00" width="254.60" height="23.00" fill="url(#cr1)" mask="url(#vm)"/>
<rect x="471.6" y="771.00" width="254.60" height="23.00" fill="url(#cr1)"/>
<rect x="471.6" y="771.00" width="254.60" height="23.00" fill="url(#cr2)" mask="url(#vm)"/>
<rect x="471.6" y="794.00" width="254.60" height="23.00" fill="url(#cr2)"/>
<rect x="471.6" y="794.00" width="254.60" height="23.00" fill="url(#cr3)" mask="url(#vm)"/>
<rect x="471.6" y="817.00" width="254.60" height="23.00" fill="url(#cr3)"/>
<rect x="471.6" y="817.00" width="254.60" height="23.00" fill="url(#cr4)" mask="url(#vm)"/>
<rect x="471.6" y="840.00" width="254.60" height="22.00" fill="url(#cr4)"/>
<rect x="471.6" y="840.00" width="254.60" height="22.00" fill="url(#cr5)" mask="url(#vm)"/>
<rect x="471.6" y="862.00" width="254.60" height="23.00" fill="url(#cr5)"/>
<rect x="471.6" y="862.00" width="254.60" height="23.00" fill="url(#cr6)" mask="url(#vm)"/>
<rect x="471.6" y="885.00" width="254.60" height="23.00" fill="url(#cr6)"/>
<rect x="471.6" y="885.00" width="254.60" height="23.00" fill="url(#cr7)" mask="url(#vm)"/>
<rect x="471.6" y="908.00" width="254.60" height="23.00" fill="url(#cr7)"/>
<rect x="471.6" y="908.00" width="254.60" height="23.00" fill="url(#cr8)" mask="url(#vm)"/>
<rect x="472.1" y="748.5" width="253.60" height="182.00" fill="none" stroke="#555" stroke-opacity="0.55" stroke-width="1.6"/>
<rect x="464.4" y="762.1999999999999" width="7" height="1.4" fill="#d8d8d8"/>
<text x="435" y="767.5" font-size="14.4" fill="#dcdcdc" textLength="29.2" lengthAdjust="spacingAndGlyphs">0,35</text>
<rect x="464.4" y="798.9" width="7" height="1.4" fill="#d8d8d8"/>
<text x="435" y="804.2" font-size="14.4" fill="#dcdcdc" textLength="29.2" lengthAdjust="spacingAndGlyphs">0,34</text>
<rect x="464.4" y="835.5999999999999" width="7" height="1.4" fill="#d8d8d8"/>
<text x="435" y="840.9" font-size="14.4" fill="#dcdcdc" textLength="29.2" lengthAdjust="spacingAndGlyphs">0,33</text>
<rect x="464.4" y="872.3" width="7" height="1.4" fill="#d8d8d8"/>
<text x="435" y="877.6" font-size="14.4" fill="#dcdcdc" textLength="29.2" lengthAdjust="spacingAndGlyphs">0,32</text>
<rect x="464.4" y="909.0" width="7" height="1.4" fill="#d8d8d8"/>
<text x="435" y="914.3000000000001" font-size="14.4" fill="#dcdcdc" textLength="29.2" lengthAdjust="spacingAndGlyphs">0,31</text>
<rect x="482.2" y="932" width="1.4" height="5.4" fill="#d8d8d8"/>
<text x="482.9" y="953.8" font-size="14.4" fill="#dcdcdc" text-anchor="middle">0,29</text>
<rect x="532.5999999999999" y="932" width="1.4" height="5.4" fill="#d8d8d8"/>
<text x="533.3" y="953.8" font-size="14.4" fill="#dcdcdc" text-anchor="middle">0,3</text>
<rect x="582.9999999999999" y="932" width="1.4" height="5.4" fill="#d8d8d8"/>
<text x="583.6999999999999" y="953.8" font-size="14.4" fill="#dcdcdc" text-anchor="middle">0,31</text>
<rect x="633.3999999999999" y="932" width="1.4" height="5.4" fill="#d8d8d8"/>
<text x="634.0999999999999" y="953.8" font-size="14.4" fill="#dcdcdc" text-anchor="middle">0,32</text>
<rect x="683.8" y="932" width="1.4" height="5.4" fill="#d8d8d8"/>
<text x="684.5" y="953.8" font-size="14.4" fill="#dcdcdc" text-anchor="middle">0,33</text>
<clipPath id="cieclip"><rect x="471.6" y="747.8" width="254.6" height="183.2"/></clipPath>
<g clip-path="url(#cieclip)">
<path d="M503.2,933.2Q613.8,846.2 727.6,777.8" fill="none" stroke="#000000" stroke-width="3.4"/>
</g>
<circle cx="587.3" cy="832" r="4.2" fill="#444444" stroke="#1a1a1a" stroke-width="1.2"/>
<circle cx="607" cy="830.9" r="4.3" fill="#555555" stroke="#1a1a1a" stroke-width="1.2"/>
<rect x="590" y="831.3" width="15.6" height="15.4" fill="#1c1c1c"/>
<circle cx="592.3" cy="839.5" r="5" fill="#4a4a4a" stroke="#161616" stroke-width="1.2"/>
<circle cx="594" cy="839.2" r="5" fill="#6a6a6a" stroke="#161616" stroke-width="1.1"/>
<circle cx="595.5" cy="838.8" r="5" fill="#9a9a9a" stroke="#161616" stroke-width="1.1"/>
<circle cx="598.3" cy="836.6" r="5" fill="#cccccc" stroke="#161616" stroke-width="1"/>
<circle cx="596.9" cy="838.2" r="4.7" fill="#ffffff" stroke="#101010" stroke-width="1.5"/>
<rect x="745" y="724.3" width="933.5" height="30" fill="url(#thg)"/>
<rect x="745" y="724.3" width="14.2" height="30" fill="#000000"/>
<text x="902.5" y="745.4" font-size="14.8" fill="#ffffff" textLength="9.5" lengthAdjust="spacingAndGlyphs">0</text>
<text x="981.5" y="745.4" font-size="14.8" fill="#ffffff" textLength="19.0" lengthAdjust="spacingAndGlyphs">10</text>
<text x="1051.5" y="745.4" font-size="14.8" fill="#ffffff" textLength="19.0" lengthAdjust="spacingAndGlyphs">20</text>
<text x="1121.7" y="745.4" font-size="14.8" fill="#ffffff" textLength="19.0" lengthAdjust="spacingAndGlyphs">30</text>
<text x="1191.9" y="745.4" font-size="14.8" fill="#ffffff" textLength="19.0" lengthAdjust="spacingAndGlyphs">40</text>
<text x="1262.1" y="745.4" font-size="14.8" fill="#ffffff" textLength="19.0" lengthAdjust="spacingAndGlyphs">50</text>
<text x="1332.3" y="745.4" font-size="14.8" fill="#ffffff" textLength="19.0" lengthAdjust="spacingAndGlyphs">60</text>
<text x="1402.5" y="745.4" font-size="14.8" fill="#ffffff" textLength="19.0" lengthAdjust="spacingAndGlyphs">70</text>
<text x="1472.7" y="745.4" font-size="14.8" fill="#ffffff" textLength="19.0" lengthAdjust="spacingAndGlyphs">80</text>
<text x="1542.9" y="745.4" font-size="14.8" fill="#ffffff" textLength="19.0" lengthAdjust="spacingAndGlyphs">90</text>
<text x="1613.1" y="745.4" font-size="14.8" fill="#ffffff" textLength="28.5" lengthAdjust="spacingAndGlyphs">100</text>
<rect x="745" y="754.2" width="933.5" height="27.4" fill="#444444"/>
<rect x="745" y="754.2" width="14.2" height="27.4" fill="url(#tlc)"/>
<text x="763.6" y="774.3000000000001" font-size="15" fill="#f0f0f0" textLength="58" lengthAdjust="spacingAndGlyphs">x: CIE31</text>
<text x="902.5" y="774.3000000000001" font-size="15" fill="#f0f0f0" textLength="32.0" lengthAdjust="spacingAndGlyphs">0,27</text>
<text x="981.5" y="774.3000000000001" font-size="15" fill="#f0f0f0" textLength="32.0" lengthAdjust="spacingAndGlyphs">0,31</text>
<text x="1051.5" y="774.3000000000001" font-size="15" fill="#f0f0f0" textLength="32.0" lengthAdjust="spacingAndGlyphs">0,31</text>
<text x="1121.7" y="774.3000000000001" font-size="15" fill="#f0f0f0" textLength="32.0" lengthAdjust="spacingAndGlyphs">0,31</text>
<text x="1191.9" y="774.3000000000001" font-size="15" fill="#f0f0f0" textLength="32.0" lengthAdjust="spacingAndGlyphs">0,31</text>
<text x="1262.1" y="774.3000000000001" font-size="15" fill="#f0f0f0" textLength="32.0" lengthAdjust="spacingAndGlyphs">0,31</text>
<text x="1332.3" y="774.3000000000001" font-size="15" fill="#f0f0f0" textLength="32.0" lengthAdjust="spacingAndGlyphs">0,31</text>
<text x="1402.5" y="774.3000000000001" font-size="15" fill="#f0f0f0" textLength="32.0" lengthAdjust="spacingAndGlyphs">0,31</text>
<text x="1472.7" y="774.3000000000001" font-size="15" fill="#f0f0f0" textLength="32.0" lengthAdjust="spacingAndGlyphs">0,31</text>
<text x="1542.9" y="774.3000000000001" font-size="15" fill="#f0f0f0" textLength="32.0" lengthAdjust="spacingAndGlyphs">0,31</text>
<text x="1613.1" y="774.3000000000001" font-size="15" fill="#f0f0f0" textLength="32.0" lengthAdjust="spacingAndGlyphs">0,31</text>
<rect x="745" y="781.6" width="933.5" height="27.4" fill="#7c7c7c"/>
<rect x="745" y="781.6" width="14.2" height="27.4" fill="url(#tlc)"/>
<text x="763.6" y="801.7" font-size="15" fill="#ececec" textLength="58" lengthAdjust="spacingAndGlyphs">y: CIE31</text>
<text x="902.5" y="801.7" font-size="15" fill="#ececec" textLength="32.0" lengthAdjust="spacingAndGlyphs">0,25</text>
<text x="981.5" y="801.7" font-size="15" fill="#ececec" textLength="32.0" lengthAdjust="spacingAndGlyphs">0,33</text>
<text x="1051.5" y="801.7" font-size="15" fill="#ececec" textLength="32.0" lengthAdjust="spacingAndGlyphs">0,33</text>
<text x="1121.7" y="801.7" font-size="15" fill="#ececec" textLength="32.0" lengthAdjust="spacingAndGlyphs">0,33</text>
<text x="1191.9" y="801.7" font-size="15" fill="#ececec" textLength="32.0" lengthAdjust="spacingAndGlyphs">0,33</text>
<text x="1262.1" y="801.7" font-size="15" fill="#ececec" textLength="32.0" lengthAdjust="spacingAndGlyphs">0,33</text>
<text x="1332.3" y="801.7" font-size="15" fill="#ececec" textLength="32.0" lengthAdjust="spacingAndGlyphs">0,33</text>
<text x="1402.5" y="801.7" font-size="15" fill="#ececec" textLength="32.0" lengthAdjust="spacingAndGlyphs">0,33</text>
<text x="1472.7" y="801.7" font-size="15" fill="#ececec" textLength="32.0" lengthAdjust="spacingAndGlyphs">0,33</text>
<text x="1542.9" y="801.7" font-size="15" fill="#ececec" textLength="32.0" lengthAdjust="spacingAndGlyphs">0,33</text>
<text x="1613.1" y="801.7" font-size="15" fill="#ececec" textLength="32.0" lengthAdjust="spacingAndGlyphs">0,33</text>
<rect x="745" y="809.0" width="933.5" height="27.4" fill="#444444"/>
<rect x="745" y="809.0" width="14.2" height="27.4" fill="url(#tlc)"/>
<text x="763.6" y="829.1" font-size="15" fill="#f0f0f0">Y</text>
<text x="902.5" y="829.1" font-size="15" fill="#f0f0f0" textLength="32.0" lengthAdjust="spacingAndGlyphs">0,31</text>
<text x="981.5" y="829.1" font-size="15" fill="#f0f0f0" textLength="32.0" lengthAdjust="spacingAndGlyphs">3,38</text>
<text x="1051.5" y="829.1" font-size="15" fill="#f0f0f0" textLength="41.4" lengthAdjust="spacingAndGlyphs">14,14</text>
<text x="1121.7" y="829.1" font-size="15" fill="#f0f0f0" textLength="41.4" lengthAdjust="spacingAndGlyphs">33,43</text>
<text x="1191.9" y="829.1" font-size="15" fill="#f0f0f0" textLength="41.4" lengthAdjust="spacingAndGlyphs">62,99</text>
<text x="1262.1" y="829.1" font-size="15" fill="#f0f0f0" textLength="50.8" lengthAdjust="spacingAndGlyphs">102,25</text>
<text x="1332.3" y="829.1" font-size="15" fill="#f0f0f0" textLength="50.8" lengthAdjust="spacingAndGlyphs">151,78</text>
<text x="1402.5" y="829.1" font-size="15" fill="#f0f0f0" textLength="50.8" lengthAdjust="spacingAndGlyphs">211,89</text>
<text x="1472.7" y="829.1" font-size="15" fill="#f0f0f0" textLength="50.8" lengthAdjust="spacingAndGlyphs">287,53</text>
<text x="1542.9" y="829.1" font-size="15" fill="#f0f0f0" textLength="50.8" lengthAdjust="spacingAndGlyphs">376,01</text>
<text x="1613.1" y="829.1" font-size="15" fill="#f0f0f0" textLength="50.8" lengthAdjust="spacingAndGlyphs">475,57</text>
<rect x="745" y="836.4000000000001" width="933.5" height="27.4" fill="#7c7c7c"/>
<rect x="745" y="836.4000000000001" width="14.2" height="27.4" fill="url(#tlc)"/>
<text x="763.6" y="856.5000000000001" font-size="15" fill="#ececec" textLength="61" lengthAdjust="spacingAndGlyphs">Target Y</text>
<text x="902.5" y="856.5000000000001" font-size="15" fill="#ececec" textLength="32.0" lengthAdjust="spacingAndGlyphs">0,00</text>
<text x="981.5" y="856.5000000000001" font-size="15" fill="#ececec" textLength="32.0" lengthAdjust="spacingAndGlyphs">4,91</text>
<text x="1051.5" y="856.5000000000001" font-size="15" fill="#ececec" textLength="41.4" lengthAdjust="spacingAndGlyphs">15,74</text>
<text x="1121.7" y="856.5000000000001" font-size="15" fill="#ececec" textLength="41.4" lengthAdjust="spacingAndGlyphs">34,37</text>
<text x="1191.9" y="856.5000000000001" font-size="15" fill="#ececec" textLength="41.4" lengthAdjust="spacingAndGlyphs">63,19</text>
<text x="1262.1" y="856.5000000000001" font-size="15" fill="#ececec" textLength="50.8" lengthAdjust="spacingAndGlyphs">102,66</text>
<text x="1332.3" y="856.5000000000001" font-size="15" fill="#ececec" textLength="50.8" lengthAdjust="spacingAndGlyphs">151,49</text>
<text x="1402.5" y="856.5000000000001" font-size="15" fill="#ececec" textLength="50.8" lengthAdjust="spacingAndGlyphs">211,73</text>
<text x="1472.7" y="856.5000000000001" font-size="15" fill="#ececec" textLength="50.8" lengthAdjust="spacingAndGlyphs">287,16</text>
<text x="1542.9" y="856.5000000000001" font-size="15" fill="#ececec" textLength="50.8" lengthAdjust="spacingAndGlyphs">376,32</text>
<text x="1613.1" y="856.5000000000001" font-size="15" fill="#ececec" textLength="50.8" lengthAdjust="spacingAndGlyphs">475,57</text>
<rect x="745" y="863.8000000000001" width="933.5" height="27.4" fill="#444444"/>
<rect x="745" y="863.8000000000001" width="14.2" height="27.4" fill="url(#tlc)"/>
<text x="763.6" y="883.9000000000001" font-size="15" fill="#f0f0f0" textLength="127.6" lengthAdjust="spacingAndGlyphs">Gamma Log/Log</text>
<text x="902.5" y="883.9000000000001" font-size="15" fill="#f0f0f0" textLength="32.0" lengthAdjust="spacingAndGlyphs">1,28</text>
<text x="981.5" y="883.9000000000001" font-size="15" fill="#f0f0f0" textLength="32.0" lengthAdjust="spacingAndGlyphs">2,17</text>
<text x="1051.5" y="883.9000000000001" font-size="15" fill="#f0f0f0" textLength="32.0" lengthAdjust="spacingAndGlyphs">2,18</text>
<text x="1121.7" y="883.9000000000001" font-size="15" fill="#f0f0f0" textLength="32.0" lengthAdjust="spacingAndGlyphs">2,19</text>
<text x="1191.9" y="883.9000000000001" font-size="15" fill="#f0f0f0" textLength="32.0" lengthAdjust="spacingAndGlyphs">2,21</text>
<text x="1262.1" y="883.9000000000001" font-size="15" fill="#f0f0f0" textLength="32.0" lengthAdjust="spacingAndGlyphs">2,23</text>
<text x="1332.3" y="883.9000000000001" font-size="15" fill="#f0f0f0" textLength="32.0" lengthAdjust="spacingAndGlyphs">2,24</text>
<text x="1402.5" y="883.9000000000001" font-size="15" fill="#f0f0f0" textLength="32.0" lengthAdjust="spacingAndGlyphs">2,25</text>
<text x="1472.7" y="883.9000000000001" font-size="15" fill="#f0f0f0" textLength="32.0" lengthAdjust="spacingAndGlyphs">2,25</text>
<text x="1542.9" y="883.9000000000001" font-size="15" fill="#f0f0f0" textLength="32.0" lengthAdjust="spacingAndGlyphs">2,28</text>
<text x="1613.1" y="883.9000000000001" font-size="15" fill="#f0f0f0" textLength="32.0" lengthAdjust="spacingAndGlyphs">2,27</text>
<rect x="745" y="891.2" width="933.5" height="27.4" fill="#7c7c7c"/>
<rect x="745" y="891.2" width="14.2" height="27.4" fill="url(#tlc)"/>
<text x="763.6" y="911.3000000000001" font-size="15" fill="#ececec" textLength="29.4" lengthAdjust="spacingAndGlyphs">CCT</text>
<text x="902.5" y="911.3000000000001" font-size="15" fill="#ececec" textLength="69.6" lengthAdjust="spacingAndGlyphs">16116,00</text>
<text x="981.5" y="911.3000000000001" font-size="15" fill="#ececec" textLength="60.2" lengthAdjust="spacingAndGlyphs">6485,00</text>
<text x="1051.5" y="911.3000000000001" font-size="15" fill="#ececec" textLength="60.2" lengthAdjust="spacingAndGlyphs">6590,00</text>
<text x="1121.7" y="911.3000000000001" font-size="15" fill="#ececec" textLength="60.2" lengthAdjust="spacingAndGlyphs">6396,00</text>
<text x="1191.9" y="911.3000000000001" font-size="15" fill="#ececec" textLength="60.2" lengthAdjust="spacingAndGlyphs">6553,00</text>
<text x="1262.1" y="911.3000000000001" font-size="15" fill="#ececec" textLength="60.2" lengthAdjust="spacingAndGlyphs">6581,00</text>
<text x="1332.3" y="911.3000000000001" font-size="15" fill="#ececec" textLength="60.2" lengthAdjust="spacingAndGlyphs">6543,00</text>
<text x="1402.5" y="911.3000000000001" font-size="15" fill="#ececec" textLength="60.2" lengthAdjust="spacingAndGlyphs">6522,00</text>
<text x="1472.7" y="911.3000000000001" font-size="15" fill="#ececec" textLength="60.2" lengthAdjust="spacingAndGlyphs">6512,00</text>
<text x="1542.9" y="911.3000000000001" font-size="15" fill="#ececec" textLength="60.2" lengthAdjust="spacingAndGlyphs">6498,00</text>
<text x="1613.1" y="911.3000000000001" font-size="15" fill="#ececec" textLength="60.2" lengthAdjust="spacingAndGlyphs">6518,00</text>
<rect x="745" y="918.6" width="933.5" height="27.4" fill="#444444"/>
<rect x="745" y="918.6" width="14.2" height="27.4" fill="url(#tlc)"/>
<text x="763.6" y="938.7" font-size="15" fill="#f0f0f0" textLength="62.4" lengthAdjust="spacingAndGlyphs">ΔE 2000</text>
<text x="902.5" y="938.7" font-size="15" fill="#f0f0f0" textLength="32.0" lengthAdjust="spacingAndGlyphs">1,00</text>
<text x="981.5" y="938.7" font-size="15" fill="#f0f0f0" textLength="32.0" lengthAdjust="spacingAndGlyphs">1,75</text>
<text x="1051.5" y="938.7" font-size="15" fill="#f0f0f0" textLength="32.0" lengthAdjust="spacingAndGlyphs">1,25</text>
<text x="1121.7" y="938.7" font-size="15" fill="#f0f0f0" textLength="32.0" lengthAdjust="spacingAndGlyphs">0,62</text>
<text x="1191.9" y="938.7" font-size="15" fill="#f0f0f0" textLength="32.0" lengthAdjust="spacingAndGlyphs">0,63</text>
<text x="1262.1" y="938.7" font-size="15" fill="#f0f0f0" textLength="32.0" lengthAdjust="spacingAndGlyphs">0,55</text>
<text x="1332.3" y="938.7" font-size="15" fill="#f0f0f0" textLength="32.0" lengthAdjust="spacingAndGlyphs">0,36</text>
<text x="1402.5" y="938.7" font-size="15" fill="#f0f0f0" textLength="32.0" lengthAdjust="spacingAndGlyphs">0,29</text>
<text x="1472.7" y="938.7" font-size="15" fill="#f0f0f0" textLength="32.0" lengthAdjust="spacingAndGlyphs">0,64</text>
<text x="1542.9" y="938.7" font-size="15" fill="#f0f0f0" textLength="32.0" lengthAdjust="spacingAndGlyphs">0,57</text>
<text x="1613.1" y="938.7" font-size="15" fill="#f0f0f0" textLength="32.0" lengthAdjust="spacingAndGlyphs">0,50</text>
<rect x="1.3" y="968.7" width="139.9" height="69" rx="4.8" fill="url(#lvrim)"/>
<rect x="3.1" y="970.5" width="136.3" height="65.6" rx="3.4" fill="url(#lvb)"/>
<rect x="6.4" y="974" width="129.7" height="41.9" rx="3.9" fill="url(#bev)" fill-opacity="0.75"/>
<rect x="7.1" y="974.8" width="128.3" height="40.3" rx="3.3" fill="#000000"/>
<text x="70.8" y="1032.7" font-size="10.8" fill="#2a2a2a" text-anchor="middle" font-weight="bold">0</text>
<rect x="143.2" y="968.7" width="139.9" height="69" rx="4.8" fill="url(#lvrim)"/>
<rect x="145.0" y="970.5" width="136.3" height="65.6" rx="3.4" fill="url(#lvb)"/>
<rect x="148.3" y="974" width="129.7" height="41.9" rx="3.9" fill="url(#bev)" fill-opacity="0.75"/>
<rect x="149.0" y="974.8" width="128.3" height="40.3" rx="3.3" fill="#1b1b1b"/>
<text x="212.7" y="1032.7" font-size="10.8" fill="#2a2a2a" text-anchor="middle" font-weight="bold">10</text>
<rect x="285.1" y="968.7" width="139.9" height="69" rx="4.8" fill="url(#lvrim)"/>
<rect x="286.9" y="970.5" width="136.3" height="65.6" rx="3.4" fill="url(#lvb)"/>
<rect x="290.2" y="974" width="129.7" height="41.9" rx="3.9" fill="url(#bev)" fill-opacity="0.75"/>
<rect x="290.9" y="974.8" width="128.3" height="40.3" rx="3.3" fill="#333333"/>
<text x="354.6" y="1032.7" font-size="10.8" fill="#2a2a2a" text-anchor="middle" font-weight="bold">20</text>
<rect x="427.0" y="968.7" width="139.9" height="69" rx="4.8" fill="url(#lvrim)"/>
<rect x="428.8" y="970.5" width="136.3" height="65.6" rx="3.4" fill="url(#lvb)"/>
<rect x="432.1" y="974" width="129.7" height="41.9" rx="3.9" fill="url(#bev)" fill-opacity="0.75"/>
<rect x="432.8" y="974.8" width="128.3" height="40.3" rx="3.3" fill="#4d4d4d"/>
<text x="496.5" y="1032.7" font-size="10.8" fill="#2a2a2a" text-anchor="middle" font-weight="bold">30</text>
<rect x="568.9" y="968.7" width="139.9" height="69" rx="4.8" fill="url(#lvrim)"/>
<rect x="570.7" y="970.5" width="136.3" height="65.6" rx="3.4" fill="url(#lvb)"/>
<rect x="574.0" y="974" width="129.7" height="41.9" rx="3.9" fill="url(#bev)" fill-opacity="0.75"/>
<rect x="574.7" y="974.8" width="128.3" height="40.3" rx="3.3" fill="#666666"/>
<text x="638.4" y="1032.7" font-size="10.8" fill="#2a2a2a" text-anchor="middle" font-weight="bold">40</text>
<rect x="710.8" y="968.7" width="139.9" height="69" rx="4.8" fill="url(#lvrim)"/>
<rect x="712.6" y="970.5" width="136.3" height="65.6" rx="3.4" fill="url(#lvb)"/>
<rect x="715.9" y="974" width="129.7" height="41.9" rx="3.9" fill="url(#bev)" fill-opacity="0.75"/>
<rect x="716.6" y="974.8" width="128.3" height="40.3" rx="3.3" fill="#808080"/>
<text x="780.3" y="1032.7" font-size="10.8" fill="#2a2a2a" text-anchor="middle" font-weight="bold">50</text>
<rect x="852.7" y="968.7" width="139.9" height="69" rx="4.8" fill="url(#lvrim)"/>
<rect x="854.5" y="970.5" width="136.3" height="65.6" rx="3.4" fill="url(#lvb)"/>
<rect x="857.8" y="974" width="129.7" height="41.9" rx="3.9" fill="url(#bev)" fill-opacity="0.75"/>
<rect x="858.5" y="974.8" width="128.3" height="40.3" rx="3.3" fill="#999999"/>
<text x="922.2" y="1032.7" font-size="10.8" fill="#2a2a2a" text-anchor="middle" font-weight="bold">60</text>
<rect x="994.6" y="968.7" width="139.9" height="69" rx="4.8" fill="url(#lvrim)"/>
<rect x="996.4" y="970.5" width="136.3" height="65.6" rx="3.4" fill="url(#lvb)"/>
<rect x="999.7" y="974" width="129.7" height="41.9" rx="3.9" fill="url(#bev)" fill-opacity="0.75"/>
<rect x="1000.4" y="974.8" width="128.3" height="40.3" rx="3.3" fill="#b3b3b3"/>
<text x="1064.1" y="1032.7" font-size="10.8" fill="#2a2a2a" text-anchor="middle" font-weight="bold">70</text>
<rect x="1136.5" y="968.7" width="139.9" height="69" rx="4.8" fill="url(#lvrim)"/>
<rect x="1138.3" y="970.5" width="136.3" height="65.6" rx="3.4" fill="url(#lvb)"/>
<rect x="1141.6" y="974" width="129.7" height="41.9" rx="3.9" fill="url(#bev)" fill-opacity="0.75"/>
<rect x="1142.3" y="974.8" width="128.3" height="40.3" rx="3.3" fill="#cccccc"/>
<text x="1206.0" y="1032.7" font-size="10.8" fill="#2a2a2a" text-anchor="middle" font-weight="bold">80</text>
<rect x="1278.4" y="968.7" width="139.9" height="69" rx="4.8" fill="url(#lvrim)"/>
<rect x="1280.2" y="970.5" width="136.3" height="65.6" rx="3.4" fill="url(#lvb)"/>
<rect x="1283.5" y="974" width="129.7" height="41.9" rx="3.9" fill="url(#bev)" fill-opacity="0.75"/>
<rect x="1284.2" y="974.8" width="128.3" height="40.3" rx="3.3" fill="#e6e6e6"/>
<text x="1347.9" y="1032.7" font-size="10.8" fill="#2a2a2a" text-anchor="middle" font-weight="bold">90</text>
<rect x="1420.3" y="968.7" width="139.9" height="69" rx="4.5" fill="url(#lvsel)"/>
<rect x="1425.4" y="974" width="129.7" height="41.9" rx="3.9" fill="#2a2a2a" fill-opacity="0.75"/>
<rect x="1426.1" y="974.8" width="128.3" height="40.3" rx="3.3" fill="#ffffff"/>
<text x="1489.8" y="1032.7" font-size="10.8" fill="#ffffff" text-anchor="middle" font-weight="bold">100</text>
<path d="M1563.3,989V973Q1563.3,968.8 1567.5,968.8H1613Q1617.2,968.8 1617.2,973V989Z" fill="url(#ctl)"/>
<circle cx="1590.3" cy="978.8" r="8.6" fill="url(#playc)" fill-opacity="0.75"/>
<path d="M1585.2,981.4L1590.3,975.8L1595.4,981.4Z" fill="#2a2a2a"/>
<path d="M1563.3,990.6H1617.2V1033.5Q1617.2,1037.6 1613,1037.6H1567.5Q1563.3,1037.6 1563.3,1033.5Z" fill="url(#ctl2)"/>
<rect x="1574.4" y="997.9" width="31.6" height="31.9" rx="4.5" fill="url(#sqi)" stroke="#1a1a1a" stroke-width="2.2"/>
<rect x="1582.8" y="1007.3" width="15.3" height="14.1" fill="url(#sqk)"/>
<path d="M1619.2,1002.2V973Q1619.2,968.8 1623.4,968.8H1669.6V1002.2Z" fill="url(#ctl)"/>
<rect x="1669.6" y="968.8" width="1" height="33.4" fill="#4a4a4a"/>
<circle cx="1644.5" cy="985.7" r="11" fill="url(#playc)" fill-opacity="0.8"/>
<rect x="1670.6" y="968.8" width="50.100000000000136" height="33.4" fill="url(#ctl)"/>
<rect x="1720.7" y="968.8" width="1" height="33.4" fill="#4a4a4a"/>
<circle cx="1695.8" cy="985.7" r="11" fill="url(#playc)" fill-opacity="0.8"/>
<rect x="1721.7" y="968.8" width="49.899999999999864" height="33.4" fill="url(#ctl)"/>
<rect x="1771.6" y="968.8" width="1" height="33.4" fill="#4a4a4a"/>
<circle cx="1746.8" cy="985.7" r="11" fill="url(#playc)" fill-opacity="0.8"/>
<rect x="1772.6" y="968.8" width="49.80000000000018" height="33.4" fill="url(#ctl)"/>
<rect x="1822.4" y="968.8" width="1" height="33.4" fill="#4a4a4a"/>
<circle cx="1797.6" cy="985.7" r="11" fill="url(#playc)" fill-opacity="0.8"/>
<rect x="1823.4" y="968.8" width="50.09999999999991" height="33.4" fill="url(#ctl)"/>
<rect x="1873.5" y="968.8" width="1" height="33.4" fill="#4a4a4a"/>
<circle cx="1848.5" cy="985.7" r="11" fill="url(#playc)" fill-opacity="0.8"/>
<rect x="1874.5" y="968.8" width="45.5" height="33.4" fill="#2e2e2e"/>
<circle cx="1901" cy="985.5" r="11" fill="#3a3a3a"/>
<rect x="1640.2" y="981.4" width="8.6" height="8.6" fill="#2c2c2c"/>
<path d="M1692.15,980.4V991L1700.95,985.7Z" fill="#2c2c2c"/>
<text x="1740.2" y="989.6" font-size="11" fill="#2c2c2c" textLength="13.2" lengthAdjust="spacingAndGlyphs" font-weight="bold">[··]</text>
<text x="1789.6" y="992.2" font-size="20" fill="#2c2c2c" textLength="16" lengthAdjust="spacingAndGlyphs" font-weight="bold">∞</text>
<path d="M1843.1499999999999,984.6A5.6,5.6 0 0 1 1852.75,982" fill="none" stroke="#2c2c2c" stroke-width="2.3"/>
<path d="M1853.95,986.8A5.6,5.6 0 0 1 1844.35,989.4" fill="none" stroke="#2c2c2c" stroke-width="2.3"/>
<path d="M1855.1499999999999,979.2V984.8H1849.55Z" fill="#2c2c2c"/>
<path d="M1841.95,992.2V986.6H1847.55Z" fill="#2c2c2c"/>
<path d="M1619.2,1004.5H1771.6V1037.6H1623.4Q1619.2,1037.6 1619.2,1033.4Z" fill="url(#ctl)"/>
<rect x="1771.6" y="1004.5" width="1" height="33.1" fill="#4a4a4a"/>
<rect x="1772.6" y="1004.5" width="147.4" height="33.1" fill="url(#ctl)"/>
<rect x="1619.2" y="1004.5" width="300.8" height="1" fill="#b4b4b4"/>
<circle cx="1653.8" cy="1020.8" r="11" fill="url(#playc)" fill-opacity="0.8"/>
<circle cx="1894.3" cy="1020.8" r="11" fill="url(#playc)" fill-opacity="0.8"/>
<text x="1653.6" y="1026.4" font-size="19" fill="#333333" text-anchor="middle">«</text>
<text x="1894.5" y="1026.4" font-size="19" fill="#333333" text-anchor="middle">»</text>
<text x="1684" y="1029.9" font-size="24.2" fill="#2e2e2e" textLength="57" lengthAdjust="spacingAndGlyphs" stroke="#2e2e2e" stroke-width="0.5">Back</text>
<text x="1805.2" y="1029.9" font-size="24.2" fill="#2e2e2e" textLength="57.8" lengthAdjust="spacingAndGlyphs" stroke="#2e2e2e" stroke-width="0.5">Next</text>
</svg>
</body></html>
